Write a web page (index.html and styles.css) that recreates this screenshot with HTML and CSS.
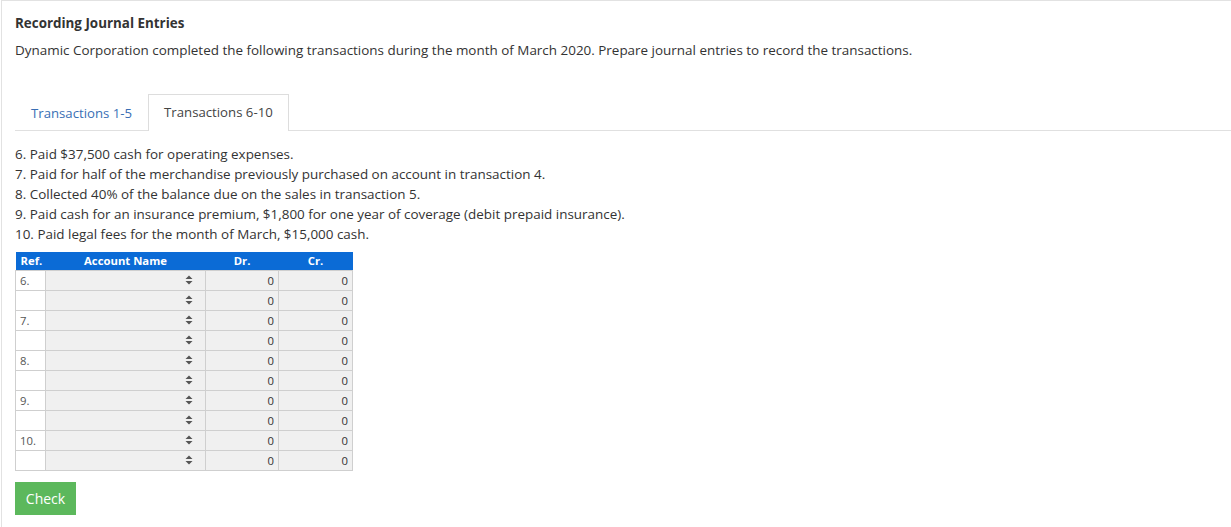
FILE: index.html
```html
<!DOCTYPE html>
<html>
<head>
<meta charset="utf-8">
<link rel="stylesheet" href="styles.css">
</head>
<body>
<div class="page">
  <h1 class="title">Recording Journal Entries</h1>
  <p class="desc">Dynamic Corporation completed the following transactions during the month of March 2020. Prepare journal entries to record the transactions.</p>
  <div class="tabs">
    <div class="tab">Transactions 1-5</div>
    <div class="tab active">Transactions 6-10</div>
  </div>
  <ol class="list">
    <li>6. Paid $37,500 cash for operating expenses.</li>
    <li>7. Paid for half of the merchandise previously purchased on account in transaction 4.</li>
    <li>8. Collected 40% of the balance due on the sales in transaction 5.</li>
    <li>9. Paid cash for an insurance premium, $1,800 for one year of coverage (debit prepaid insurance).</li>
    <li>10. Paid legal fees for the month of March, $15,000 cash.</li>
  </ol>
  <table class="journal">
    <colgroup><col class="c-ref"><col class="c-acct"><col class="c-dr"><col class="c-cr"></colgroup>
    <thead>
      <tr><th class="h-ref">Ref.</th><th>Account Name</th><th>Dr.</th><th>Cr.</th></tr>
    </thead>
    <tbody id="rows"></tbody>
  </table>
  <button class="check">Check</button>
</div>
<script>
  var refs = ["6.","","7.","","8.","","9.","","10.",""];
  var icon = '<svg class="spin" width="8" height="10" viewBox="0 0 8 10"><path d="M4 0.5 L7.5 4 L0.5 4 Z M0.5 6 L7.5 6 L4 9.5 Z" fill="#555"/></svg>';
  var html = "";
  refs.forEach(function(r){
    html += '<tr><td class="ref">'+r+'</td><td class="acct">'+icon+'</td><td class="num">0</td><td class="num">0</td></tr>';
  });
  document.getElementById("rows").innerHTML = html;
</script>
</body>
</html>
```

FILE: styles.css
```css
html, body {
  margin: 0;
  padding: 0;
  background: #fff;
}
body {
  font-family: "Open Sans", "Liberation Sans", sans-serif;
  font-size: 13.45px;
  color: #333;
  overflow: hidden;
}
.page {
  margin-left: 1px;
  border-top: 1px solid #e2e2e2;
  border-left: 1px solid #e2e2e2;
  padding: 12px 0 0 13px;
  height: 560px;
}
.title {
  font-size: 13.4px;
  font-weight: 700;
  line-height: 20px;
  margin: 0;
  color: #333;
}
.desc {
  margin: 7px 0 0 0;
  line-height: 20px;
}
.tabs {
  display: flex;
  margin-top: 34px;
  border-bottom: 1px solid #e0e0e0;
  align-items: flex-end;
  font-size: 13.2px;
}
.tab {
  height: 35px;
  line-height: 35px;
  padding: 0 15px;
  color: #3a6fb5;
  border: 1px solid transparent;
  border-bottom: none;
  margin-bottom: -1px;
}
.tab.active {
  color: #444;
  border-color: #ddd;
  background: #fff;
  height: 36px;
}
.list {
  list-style: none;
  margin: 13px 0 0 0;
  padding: 0;
}
.list li {
  line-height: 20px;
}
.journal {
  border-collapse: collapse;
  margin-top: 8px;
  table-layout: fixed;
  width: 337px;
  font-size: 11.3px;
}
.c-ref { width: 30px; }
.c-acct { width: 160px; }
.c-dr { width: 73px; }
.c-cr { width: 74px; }
.journal th {
  background: #0b6bd6;
  color: #fff;
  font-weight: 700;
  height: 18px;
  padding: 0;
  line-height: 18px;
  text-align: center;
  border: none;
}
.journal th.h-ref {
  text-align: left;
  padding-left: 5px;
}
.journal td {
  border: 1px solid #cfcfcf;
  height: 19px;
  padding: 0;
  line-height: 18px;
  background: #f0f0f0;
}
.journal td.ref {
  background: #fff;
  padding-left: 4px;
  color: #555;
}
.journal td.acct {
  text-align: right;
  padding-right: 12px;
}
.spin {
  display: inline-block;
  vertical-align: middle;
  margin-top: -2px;
}
.journal td.num {
  text-align: right;
  padding-right: 4px;
  color: #333;
}
.check {
  display: block;
  margin-top: 11px;
  background: #5cb85c;
  color: #fff;
  border: none;
  font-family: "Open Sans", "Liberation Sans", sans-serif;
  font-size: 14px;
  width: 61px;
  height: 33px;
  padding: 0;
  cursor: pointer;
}
```
